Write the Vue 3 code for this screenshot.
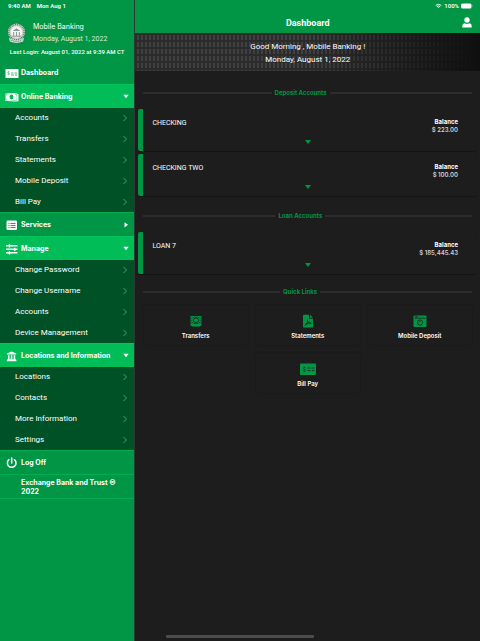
<script setup>
import { reactive } from 'vue'

const sections = reactive([
  { title: 'Online Banking', icon: 'cash', open: true, items: ['Accounts', 'Transfers', 'Statements', 'Mobile Deposit', 'Bill Pay'] },
  { title: 'Services', icon: 'list', open: false, items: [] },
  { title: 'Manage', icon: 'sliders', open: true, items: ['Change Password', 'Change Username', 'Accounts', 'Device Management'] },
  { title: 'Locations and Information', icon: 'bank', open: true, items: ['Locations', 'Contacts', 'More Information', 'Settings'] },
])

const groups = [
  {
    title: 'Deposit Accounts',
    accounts: [
      { name: 'CHECKING', balance: '$ 223.00' },
      { name: 'CHECKING TWO', balance: '$ 100.00' },
    ],
  },
  { title: 'Loan Accounts', accounts: [{ name: 'LOAN 7', balance: '$ 185,445.43' }] },
]

const links = [
  { label: 'Transfers', icon: 'transfer' },
  { label: 'Statements', icon: 'pdf' },
  { label: 'Mobile Deposit', icon: 'camera' },
  { label: 'Bill Pay', icon: 'check' },
]
</script>

<template>
  <div class="app">
    <aside class="sidebar">
      <div class="status"><span>9:40 AM</span><span>Mon Aug 1</span></div>
      <div class="profile">
        <svg class="seal" viewBox="0 0 20 22" aria-hidden="true">
          <circle cx="10" cy="10" r="9" fill="#c9d2cc" />
          <circle cx="10" cy="10" r="8" fill="none" stroke="#5f6d64" stroke-width="1.400" stroke-dasharray="1 1" />
          <circle cx="10" cy="10" r="6" fill="#f2f4f2" />
          <path d="M6 9l4-3 4 3zM6.500 10h1v4h-1zM9.500 10h1v4h-1zM12.500 10h1v4h-1zM5.500 14h9v1h-9z" fill="#8b958f" />
          <path d="M2 16q8 5 16 0l-1 4q-7 3-14 0z" fill="#d4dcd6" />
          <path d="M4 18.500q6 2.500 12 0" fill="none" stroke="#4b5a50" stroke-dasharray="1 1" />
        </svg>
        <div class="who">
          <span>Mobile Banking</span>
          <span class="date">Monday, August 1, 2022</span>
        </div>
      </div>
      <p class="last">Last Login: August 01, 2022 at 9:39 AM CT</p>

      <nav>
        <a class="row plain" href="#dashboard">
          <svg class="icon" viewBox="0 0 14 12" aria-hidden="true">
            <rect x="0.500" y="2" width="13" height="9" rx="0.600" fill="#fff" />
            <path d="M4.300 4.900q-1.500-.6-1.500.4 0 .7.800.8.900.2.800 1-.3.900-1.700.3M6 6h2.500M9.500 6h2.500M6 8h3M10 8h2" fill="none" stroke="#009645" stroke-width="0.700" />
          </svg>
          <span>Dashboard</span>
        </a>

        <template v-for="s in sections" :key="s.title">
          <button type="button" class="row" :class="{ open: s.open }" :aria-expanded="s.open" @click="s.open = !s.open">
            <svg v-if="s.icon === 'cash'" class="icon" viewBox="0 0 14 12" aria-hidden="true">
              <path d="M0.500 2.500l11-.5v7.500l-11 .5z" fill="#fff" />
              <path d="M3 11l10.500-.8V3l-2-.2v7z" fill="#fff" />
              <ellipse cx="6.500" cy="6" rx="2" ry="2.400" fill="#00bd57" />
              <path d="M0.800 4.200q1 0 1.200-1.500M0.800 8q1 0 1.200 1.500M11.500 4q-1 0-1.200-1.500" fill="none" stroke="#00bd57" stroke-width="0.700" />
            </svg>
            <svg v-else-if="s.icon === 'list'" class="icon" viewBox="0 0 14 12" aria-hidden="true">
              <rect x="1.500" y="1.500" width="10.500" height="9.500" rx="1.200" fill="#fff" />
              <path d="M3.500 4.500h1M5.500 4.500h5M3.500 6.500h1M5.500 6.500h5M3.500 8.500h1M5.500 8.500h5" stroke="#009645" stroke-width="0.900" />
            </svg>
            <svg v-else-if="s.icon === 'sliders'" class="icon" viewBox="0 0 14 12" aria-hidden="true">
              <path d="M1 2.800h11.500M1 6.300h11.500M1 9.800h11.500M4.500 1.200v3.200M9.800 4.700v3.200M4.500 8.200v3.200" stroke="#fff" stroke-width="1.400" />
            </svg>
            <svg v-else class="icon" viewBox="0 0 14 12" aria-hidden="true">
              <path d="M2 3.600L6.600 1.400 11.200 3.600v1H2zM3 5.200h1.500v4H3zM5.800 5.200h1.500v4H5.800zM8.700 5.200h1.500v4H8.700zM2.300 9.300h8.700l.6 1.900H1.600z" fill="#fff" />
            </svg>
            <span>{{ s.title }}</span>
            <svg class="caret" viewBox="0 0 6 6" aria-hidden="true">
              <path :d="s.open ? 'M0.300 0.800h5.400L3 4.200z' : 'M1.500 0.200v5.200L5 2.800z'" fill="#fff" />
            </svg>
          </button>
          <ul v-if="s.open" class="sub">
            <li v-for="item in s.items" :key="item">
              <a href="#item">
                {{ item }}
                <svg class="chev" viewBox="0 0 6 8" aria-hidden="true">
                  <path d="M1.500 1l3 3-3 3" fill="none" stroke="#5e9a74" stroke-width="0.900" />
                </svg>
              </a>
            </li>
          </ul>
        </template>

        <button type="button" class="row logoff">
          <svg class="icon" viewBox="0 0 14 12" aria-hidden="true">
            <path d="M4 2.700a4.300 4.300 0 1 0 5.400 0M6.700 1v5" fill="none" stroke="#fff" stroke-width="1.500" stroke-linecap="round" />
          </svg>
          <span>Log Off</span>
        </button>
      </nav>
      <p class="copyright">Exchange Bank and Trust © 2022</p>
    </aside>

    <main>
      <header>
        <div class="status right">
          <svg class="wifi" viewBox="0 0 8 6" aria-hidden="true">
            <path d="M0.800 2.300q3.200-2.600 6.400 0M2.100 3.700q1.900-1.500 3.800 0" fill="none" stroke="#fff" stroke-width="1.100" />
            <path d="M2.900 4.500h2.200L4 5.700z" fill="#fff" />
          </svg>
          <span>100%</span>
          <svg class="battery" viewBox="0 0 12 6" aria-hidden="true">
            <rect x="0" y="0.500" width="10.500" height="5" rx="1.500" fill="#fff" />
            <path d="M11 2.200v1.600q1-.8 0-1.600" fill="#fff" />
          </svg>
        </div>
        <div class="title">
          <h1>Dashboard</h1>
          <button type="button" class="user" aria-label="Profile">
            <svg viewBox="0 0 10 11" aria-hidden="true">
              <circle cx="5" cy="3" r="2.700" fill="#fff" />
              <path d="M0.300 10.500V8.800Q0.300 6.600 2.800 6.300Q5 7.500 7.200 6.300Q9.700 6.600 9.700 8.800V10.500z" fill="#fff" />
            </svg>
          </button>
        </div>
      </header>

      <section class="hero">
        <p>Good Morning , Mobile Banking !</p>
        <p>Monday, August 1, 2022</p>
      </section>

      <section v-for="g in groups" :key="g.title" class="group">
        <h2>{{ g.title }}</h2>
        <article v-for="a in g.accounts" :key="a.name" class="account">
          <span class="name">{{ a.name }}</span>
          <div class="balance">
            <strong>Balance</strong>
            <span>{{ a.balance }}</span>
          </div>
          <button type="button" class="more" aria-label="Show details">
            <svg viewBox="0 0 6 4" aria-hidden="true"><path d="M0 0h6L3 4z" fill="#009645" /></svg>
          </button>
        </article>
      </section>

      <section class="quick">
        <h2>Quick Links</h2>
        <div class="links">
          <a v-for="l in links" :key="l.label" href="#link" class="link">
            <svg v-if="l.icon === 'transfer'" viewBox="0 0 16 14" aria-hidden="true">
              <path d="M2.500 2h11v9l-1.500 1.500H4L2.500 11z" fill="#009645" />
              <ellipse cx="8" cy="6.300" rx="2.600" ry="2.200" fill="none" stroke="#1d1d1d" stroke-width="0.800" />
              <path d="M2.500 4h2.500l1-.8h4l1 .8h2.500M2.500 6.300h2M11.500 6.300h2M2.500 8.600h2.500l1 .9h4l1-.9h2.500" fill="none" stroke="#1d1d1d" stroke-width="0.600" />
            </svg>
            <svg v-else-if="l.icon === 'pdf'" viewBox="0 0 16 14" aria-hidden="true">
              <path d="M3 1.500q0-.8.800-.8H9v4h4v8q0 .8-.8.800H3.800q-.8 0-.8-.8z" fill="#009645" />
              <path d="M10 .7L13 3.800h-3z" fill="#009645" />
              <path d="M7.500 5.500q1 2.500-2.500 6M7.800 7q1 2.500 3.500 2.300q-3-.5-5.500 1" fill="none" stroke="#1d1d1d" stroke-width="0.900" />
            </svg>
            <svg v-else-if="l.icon === 'camera'" viewBox="0 0 16 14" aria-hidden="true">
              <rect x="1.500" y="1.500" width="13" height="11.500" rx="1" fill="#009645" />
              <path d="M3 2.700h3M2.500 4.200h11" stroke="#1d1d1d" stroke-width="0.800" />
              <circle cx="8" cy="8.500" r="2.600" fill="none" stroke="#1d1d1d" stroke-width="0.800" />
              <path d="M6.900 8.700q0-1.400 1.400-1.400" fill="none" stroke="#1d1d1d" stroke-width="0.600" />
            </svg>
            <svg v-else viewBox="0 0 16 14" aria-hidden="true">
              <rect x="0" y="1.500" width="16" height="11.500" rx="0.800" fill="#009645" />
              <path d="M5.300 5.800q-2-.8-2 .5 0 .7 1 .9 1.200.2 1 1.100-.3 1-2.100.3M4.300 4.500v1M4.300 8.800v1M7.500 6h3M11.500 6h3M7.500 8.500h3M12 8.500h2.500" fill="none" stroke="#1d1d1d" stroke-width="0.700" />
            </svg>
            <span>{{ l.label }}</span>
          </a>
        </div>
      </section>

      <div class="home"></div>
    </main>
  </div>
</template>

<style>
body {
  margin: 0;
  background: #1d1d1d;
}
</style>

<style scoped>
.app {
  display: grid;
  grid-template-columns: 28% 1fr;
  min-height: 100vh;
  font-family: Inter, "Liberation Sans", sans-serif;
  font-size: 7px;
  line-height: 10px;
  color: #fff;
}
.status, .date, .last, .sub, .hero, .name, h1 {
  font-family: Roboto, "Liberation Sans", sans-serif;
}
p, h1, h2, ul {
  margin: 0;
  padding: 0;
}
a {
  color: inherit;
  text-decoration: none;
}
button {
  padding: 0;
  border: 0;
  background: none;
  color: inherit;
  font: inherit;
  text-align: left;
}
svg {
  display: block;
  flex: none;
}
.sidebar {
  background: #009645;
}
.status {
  display: flex;
  align-items: center;
  gap: 6px;
  height: 12px;
  padding-left: 8px;
  font-size: 6px;
  font-weight: 600;
}
.profile {
  display: flex;
  align-items: center;
  gap: 7px;
  padding: 9px 0 0 7px;
}
.seal {
  width: 19px;
  height: 22px;
}
.who {
  display: flex;
  flex-direction: column;
  line-height: 12px;
  white-space: nowrap;
}
.date {
  color: #d3ecdc;
}
.last {
  padding-bottom: 1px;
  font-size: 6px;
  font-weight: 500;
  line-height: 14px;
  text-align: center;
  white-space: nowrap;
}
.row {
  display: flex;
  align-items: center;
  gap: 2px;
  box-sizing: border-box;
  width: 100%;
  height: 24px;
  padding: 0 5px;
  border-top: 1px solid #00ad50;
  font-weight: 700;
  white-space: nowrap;
}
.plain {
  border-top-color: transparent;
}
.row.open {
  background: #00bd57;
  border-top-color: #00c45c;
}
.icon {
  width: 14px;
  height: 12px;
}
.caret {
  width: 6px;
  height: 6px;
  margin-left: auto;
}
.sub {
  display: grid;
  gap: 1px;
  background: #005226;
  font-size: 8px;
  list-style: none;
}
.sub a {
  display: flex;
  align-items: center;
  justify-content: space-between;
  height: 20px;
  padding: 0 6px 0 15px;
}
.chev {
  width: 6px;
  height: 8px;
}
.copyright {
  padding: 3px 14px 2px 21px;
  border: 1px solid #00ad50;
  border-width: 1px 0;
  font-weight: 700;
  line-height: 9px;
}
main {
  display: flex;
  flex-direction: column;
  border-left: 1px solid #2f3a33;
  background: #1d1d1d;
}
header {
  background: #009645;
}
.right {
  justify-content: flex-end;
  gap: 2px;
  padding: 0 7px 0 0;
}
.wifi {
  width: 7px;
  height: 6px;
}
.battery {
  width: 12px;
  height: 6px;
}
.title {
  display: grid;
  grid-template-columns: 1fr auto 1fr;
  align-items: center;
  height: 21px;
}
h1 {
  grid-column: 2;
  font-size: 9px;
  font-weight: 700;
}
.user {
  justify-self: end;
  padding-right: 8px;
}
.user svg {
  width: 10px;
  height: 11px;
}
.hero {
  padding: 7px 0 5px;
  background:
    linear-gradient(90deg, transparent 50%, #0f0f0f),
    repeating-linear-gradient(#2b2b2b 0 2px, transparent 2px 7px),
    repeating-linear-gradient(90deg, #2b2b2b 0 2px, #414141 2px 4px);
  font-size: 8px;
  line-height: 13px;
  text-align: center;
}
.group {
  padding: 17px 4px 0 3px;
}
h2 {
  display: flex;
  align-items: center;
  gap: 3px;
  margin: 0 4px 11px 5px;
  color: #009645;
  font-size: 6px;
  font-weight: 700;
}
h2::before,
h2::after {
  content: "";
  flex: 9;
  height: 2px;
  background: #2d2d2d;
}
h2::after {
  flex: 10;
}
.group + .group {
  padding-top: 12px;
}
.account {
  display: grid;
  grid-template-columns: 1fr auto;
  margin-bottom: 3px;
  padding: 9px 18px 4px 9px;
  border-left: 5px solid #009645;
  border-radius: 2px;
  box-shadow: 0 1px 1px #141414;
  line-height: 8px;
}
.name {
  padding-top: 1px;
}
.balance {
  display: flex;
  flex-direction: column;
  text-align: right;
  color: #d0d0d0;
  font-size: 6px;
  font-weight: 600;
}
.balance strong {
  color: #fff;
  font-weight: 700;
}
.more {
  grid-column: 1 / -1;
  justify-self: center;
  padding: 6px 0 3px 5px;
}
.more svg {
  width: 6px;
  height: 4px;
}
.quick {
  padding: 10px 8px 0;
}
.quick h2 {
  margin: 0 0 8px;
}
.links {
  display: flex;
  flex-wrap: wrap;
  justify-content: center;
  gap: 8px;
}
.link {
  display: flex;
  flex: 0 1 30%;
  flex-direction: column;
  align-items: center;
  gap: 3px;
  min-width: 104px;
  padding: 9px 0 4px;
  box-sizing: border-box;
  border-radius: 2px;
  box-shadow: 0 0 2px #141414;
  font-size: 6px;
  font-weight: 600;
}
.link svg {
  width: 16px;
  height: 14px;
}
.home {
  width: 148px;
  height: 3px;
  margin: auto auto 3px 31px;
  border-radius: 1px;
  background: #4c4c4c;
}
</style>
